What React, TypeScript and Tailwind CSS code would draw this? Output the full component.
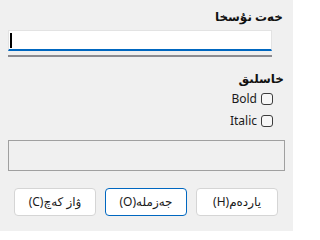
import React from "react";

const font = { fontFamily: '"Noto Sans","DejaVu Sans",sans-serif' };

function Check({ label }: { label: string }) {
  return (
    <div className="flex items-center justify-end gap-[4px] h-[22px] pr-[20px]">
      <span className="text-[12px] text-[#1a1a1a]">{label}</span>
      <span className="w-[12px] h-[12px] rounded-[3px] border border-[#3c3c3c] bg-[#f7f7f7]" />
    </div>
  );
}

function Btn({ label, primary }: { label: string; primary?: boolean }) {
  return (
    <button
      dir="rtl"
      className={
        "w-[82px] h-[28px] rounded-[4px] bg-white text-[12px] text-[#1a1a1a] flex items-center justify-center " +
        (primary ? "border border-[#0067c0]" : "border border-[#d5d5d5]")
      }
    >
      {label}
    </button>
  );
}

export default function App() {
  return (
    <div className="w-[293px] h-[231px] bg-[#f0f0f0] flex flex-col" style={font}>
      <div dir="rtl" className="pt-[8px] pr-[10px] h-[28px] text-[12px] font-bold text-[#111]">
        خەت نۇسخا
      </div>
      <div className="ml-[8px] mr-[21px] mt-[2px] h-[21px] bg-white border border-[#e3e3e3] border-b-[2px] border-b-[#0067c0] flex items-center pl-[1px]">
        <span className="w-[2px] h-[15px] bg-black" />
      </div>
      <div className="ml-[8px] mr-[21px] mt-[4px] h-[2px] bg-[#8b8b90]" />
      <div dir="rtl" className="pt-[13px] pr-[9px] h-[31px] text-[12px] font-bold text-[#111]">
        خاسلىق
      </div>
      <Check label="Bold" />
      <Check label="Italic" />
      <div className="ml-[8px] mr-[8px] mt-[8px] h-[31px] border border-[#a0a0a0]" />
      <div className="flex justify-start gap-[9px] pl-[14px] mt-[17px]">
        <Btn label="ۋاز كەچ(C)" />
        <Btn label="جەزملە(O)" primary />
        <Btn label="ياردەم(H)" />
      </div>
    </div>
  );
}
